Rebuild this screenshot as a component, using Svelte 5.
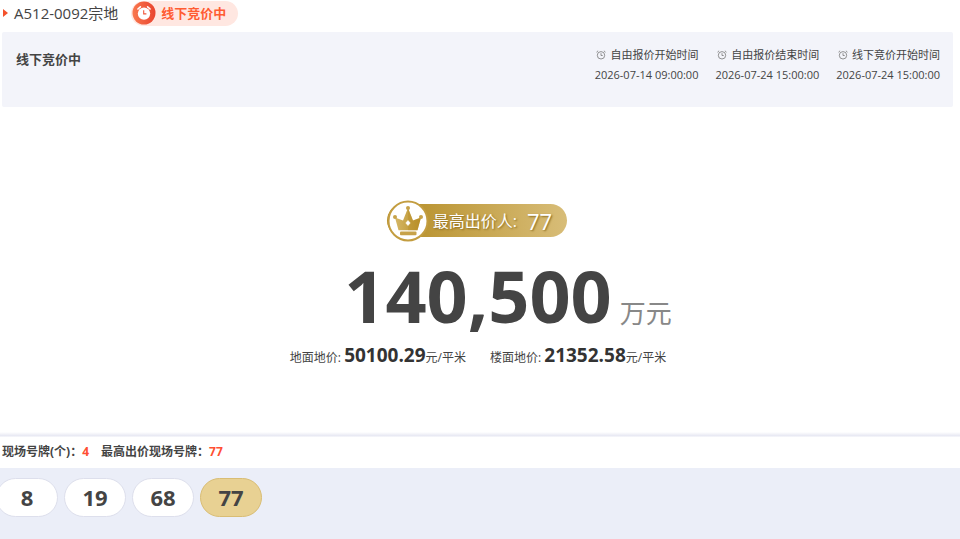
<script>
    const lot = "A512-0092宗地";
    const status = "线下竞价中";

    const times = [
        { label: "自由报价开始时间", value: "2026-07-14 09:00:00" },
        { label: "自由报价结束时间", value: "2026-07-24 15:00:00" },
        { label: "线下竞价开始时间", value: "2026-07-24 15:00:00" },
    ];

    const prices = [
        { label: "地面地价:", value: "50100.29" },
        { label: "楼面地价:", value: "21352.58" },
    ];

    const plates = [8, 19, 68, 77];
    const leader = 77;
    const total = (140500).toLocaleString("en-US");
</script>

<div class="page">
    <header>
        <span class="arrow"></span>
        <h1>{lot}</h1>
        <span class="tag">
            <svg class="tag-icon" viewBox="0 0 24 24" aria-hidden="true">
                <defs>
                    <linearGradient id="tagFill" x1="0" x2="1">
                        <stop offset="0" stop-color="#f9784e" />
                        <stop offset="1" stop-color="#e9442f" />
                    </linearGradient>
                </defs>
                <circle cx="12" cy="12" r="11.5" fill="url(#tagFill)" />
                <path d="M5.9 8 8.4 5.8M18.1 8 15.6 5.8" stroke="#fff" stroke-width="1.6" stroke-linecap="round" />
                <circle cx="12" cy="12.6" r="6.2" fill="#fff" />
                <path d="M11.7 9.2v3.7h2.7" fill="none" stroke="#f0583c" stroke-width="1.1" />
            </svg>
            {status}
        </span>
    </header>

    <section class="info">
        <h2>{status}</h2>
        <dl class="times">
            {#each times as time}
                <div>
                    <dt>
                        <svg class="clock" viewBox="0 0 10 10" fill="none" stroke="#777" stroke-width="0.8" aria-hidden="true">
                            <circle cx="5" cy="5.3" r="3.7" />
                            <path d="M5 3.2v2.3h1.7M.5 2.2 2.1.8M9.5 2.2 7.9.8" />
                        </svg>
                        {time.label}
                    </dt>
                    <dd>{time.value}</dd>
                </div>
            {/each}
        </dl>
    </section>

    <main>
        <div class="bidder">
            <span class="crown">
                <svg viewBox="0 0 42 42" aria-hidden="true">
                    <defs>
                        <linearGradient id="gold" x1="0" x2="1">
                            <stop offset="0" stop-color="#d5b766" />
                            <stop offset="1" stop-color="#b88f27" />
                        </linearGradient>
                    </defs>
                    <circle cx="21" cy="21" r="19.5" fill="#fff" stroke="#c39d40" stroke-width="2" />
                    <path d="M8 17.5 16 20.5 21 8l5 12.5 8-3-3.5 12.8h-19z" fill="url(#gold)" />
                    <path d="M21 8l5 12.5 8-3-3.5 12.8H21z" fill="#b88f27" opacity=".4" />
                    <g fill="#c7a249">
                        <circle cx="21" cy="8" r="2" />
                        <circle cx="8" cy="17" r="2" />
                        <circle cx="34" cy="17" r="2" />
                        <rect x="13" y="31.6" width="16.5" height="3.6" rx="1" />
                    </g>
                    <path d="M21 20.5 23.2 23 21 25.5 18.8 23z" fill="#fff" stroke="#fff" stroke-width=".6" />
                </svg>
            </span>
            <span>最高出价人:</span>
            <strong>{leader}</strong>
        </div>

        <p class="total"><b>{total}</b> <span>万元</span></p>

        <div class="prices">
            {#each prices as price}
                <p>{price.label} <b>{price.value}</b>元/平米</p>
            {/each}
        </div>
    </main>

    <footer>
        <div class="summary">
            <span>现场号牌(个)：<em>{plates.length}</em></span>
            <span>最高出价现场号牌：<em>{leader}</em></span>
        </div>
        <ul>
            {#each plates as plate}
                <li class:leading={plate === leader}>{plate}</li>
            {/each}
        </ul>
    </footer>
</div>

<style>
    :global(body) {
        background: #fff;
    }

    .page {
        display: flex;
        flex-direction: column;
        min-height: 100vh;
        overflow: hidden;
        color: #444;
        font-family: "Open Sans", "Noto Sans CJK SC", sans-serif;
        font-size: 12px;
    }

    h1, h2, p, dl, dd, ul {
        margin: 0;
        padding: 0;
    }

    header {
        display: flex;
        align-items: center;
        height: 26px;
        margin-bottom: 6px;
        padding-left: 3px;
    }

    .arrow {
        border: 4px solid transparent;
        border-left: 5px solid #f4512c;
        border-right: 0;
    }

    h1 {
        margin: 0 13px 0 6px;
        font-size: 15px;
        font-weight: 400;
        line-height: 26px;
    }

    .tag {
        display: flex;
        align-items: center;
        gap: 5px;
        height: 25px;
        padding: 0 12px 0 1px;
        border-radius: 13px;
        background: #ffe7e1;
        color: #ff5c32;
        font-size: 13px;
        font-weight: 700;
        line-height: 25px;
    }

    .tag-icon {
        width: 24px;
        height: 24px;
    }

    .info {
        display: flex;
        justify-content: space-between;
        box-sizing: border-box;
        min-height: 75px;
        margin: 0 7px 0 2px;
        padding: 13px 13px 13px 14px;
        border-radius: 2px;
        background: #f3f4fa;
    }

    h2 {
        font-size: 13px;
        font-weight: 700;
        line-height: 28px;
    }

    .times {
        display: flex;
        gap: 17px;
        font-size: 11px;
        line-height: 20px;
        text-align: right;
    }

    .times dt {
        display: flex;
        align-items: center;
        justify-content: flex-end;
        gap: 4px;
    }

    .clock {
        width: 10px;
        height: 10px;
    }

    main {
        display: flex;
        flex: 1;
        flex-direction: column;
        align-items: center;
        padding: 97px 4px 0 0;
    }

    .bidder {
        display: flex;
        align-items: center;
        height: 33px;
        margin-right: 2px;
        padding-right: 15px;
        border-radius: 17px;
        background: linear-gradient(90deg, #b48c24, #d8bd78);
        color: #fff;
        font-size: 16px;
        line-height: 32px;
        text-shadow: 1px 1px 2px #8a6a1c;
    }

    .crown {
        width: 42px;
        height: 42px;
        margin-right: 4px;
    }

    .crown svg {
        display: block;
    }

    .bidder strong {
        margin-left: 10px;
        font-size: 22px;
        font-weight: 400;
    }

    .total {
        display: flex;
        align-items: baseline;
        gap: 8px;
        margin: 16px 0 0 60px;
        line-height: 84px;
        white-space: nowrap;
    }

    .total b {
        font-size: 72px;
    }

    .total span {
        color: #888;
        font-size: 26px;
        line-height: 40px;
    }

    .prices {
        display: flex;
        gap: 24px;
        margin-top: 4px;
        line-height: 28px;
    }

    .prices b {
        color: #333;
        font-size: 19px;
    }

    footer {
        padding-top: 4px;
        background: linear-gradient(#fff, #e6e7f2 4px, #fff 5px);
    }

    .summary {
        display: flex;
        gap: 12px;
        padding-left: 2px;
        font-weight: 700;
        line-height: 32px;
    }

    .summary em {
        color: #ff4f33;
        font-style: normal;
    }

    ul {
        display: flex;
        gap: 6px;
        min-height: 61px;
        margin-left: -4px;
        padding-top: 10px;
        background: #ebeef8;
        list-style: none;
    }

    li {
        box-sizing: border-box;
        width: 62px;
        height: 39px;
        border: 1px solid #dddfec;
        border-radius: 20px;
        background: #fff;
        font-size: 22px;
        font-weight: 700;
        line-height: 37px;
        text-align: center;
    }

    .leading {
        border-color: #d9bd74;
        background: #e8d193;
    }
</style>
